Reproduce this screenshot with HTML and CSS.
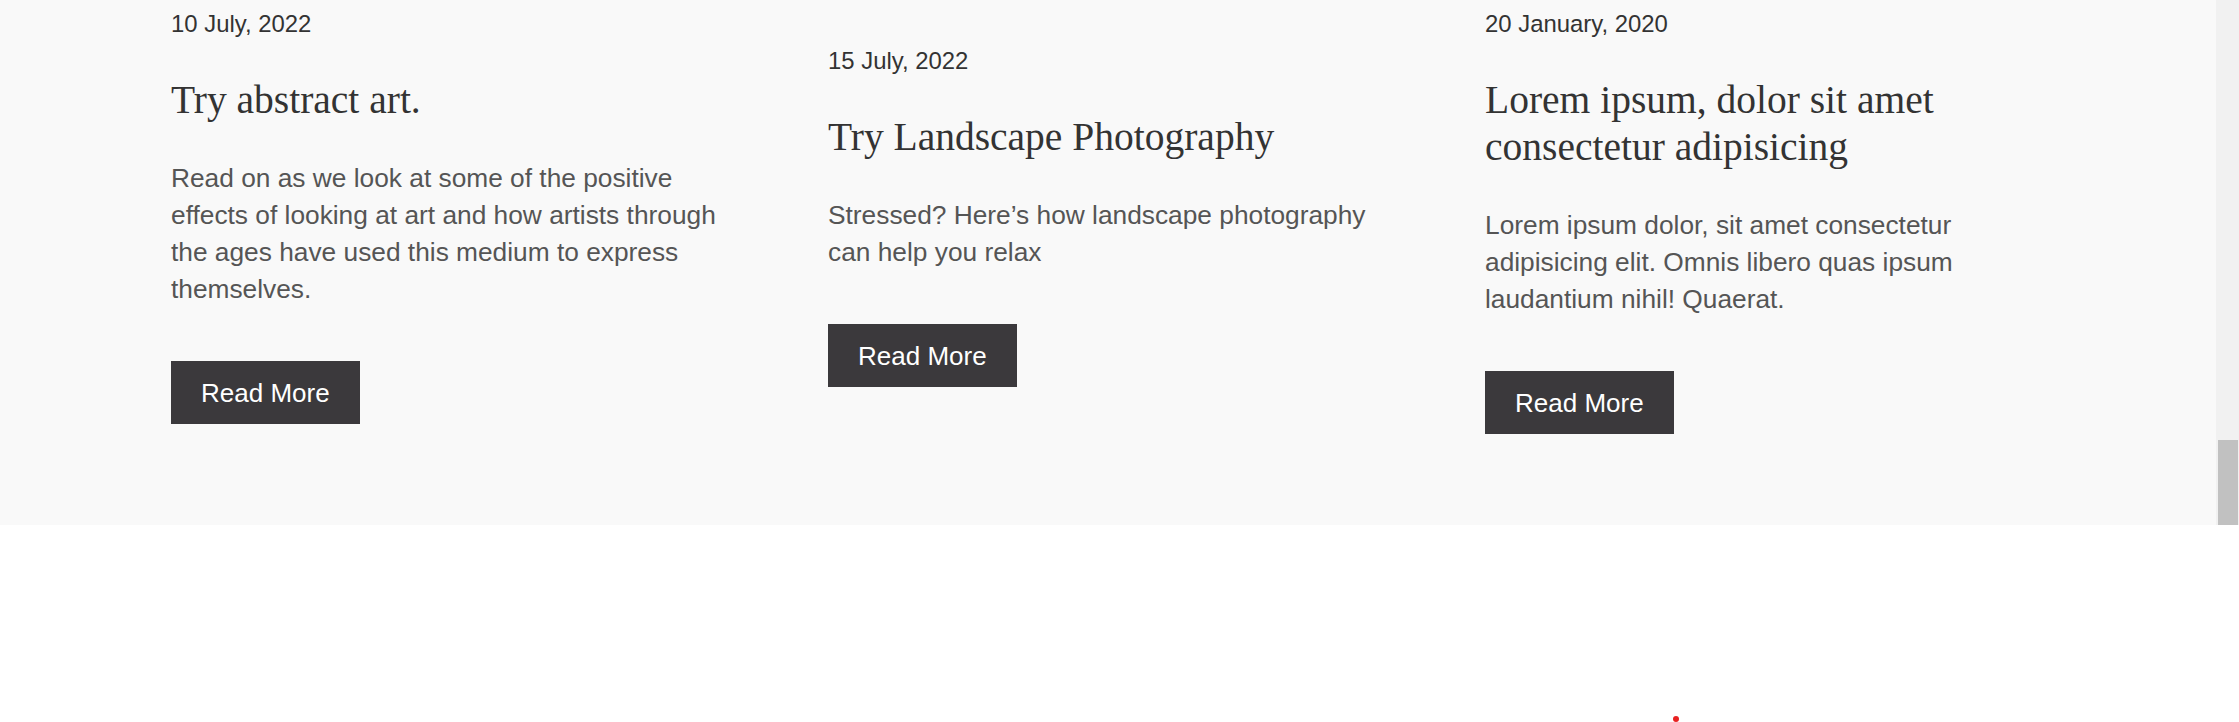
FILE: index.html
```html
<!DOCTYPE html>
<html lang="en">
<head>
<meta charset="utf-8">
<title>Blog posts</title>
<link rel="stylesheet" href="styles.css">
</head>
<body>
<div class="page">
  <div class="frame">
    <div class="viewport">
      <section class="posts">
        <div class="posts-grid">
          <article class="card">
            <p class="date">10 July, 2022</p>
            <h2 class="title">Try abstract art.</h2>
            <p class="excerpt">Read on as we look at some of the positive effects of looking at art and how artists through the ages have used this medium to express themselves.</p>
            <a class="btn" href="#">Read More</a>
          </article>
          <article class="card card-offset">
            <p class="date">15 July, 2022</p>
            <h2 class="title">Try Landscape Photography</h2>
            <p class="excerpt">Stressed? Here’s how landscape photography can help you relax</p>
            <a class="btn" href="#">Read More</a>
          </article>
          <article class="card">
            <p class="date">20 January, 2020</p>
            <h2 class="title">Lorem ipsum, dolor sit amet consectetur adipisicing</h2>
            <p class="excerpt">Lorem ipsum dolor, sit amet consectetur adipisicing elit. Omnis libero quas ipsum laudantium nihil! Quaerat.</p>
            <a class="btn" href="#">Read More</a>
          </article>
        </div>
      </section>
    </div>
    <div class="scrollbar" aria-hidden="true"><span class="thumb"></span></div>
  </div>
  <div class="below"><span class="dot"></span></div>
</div>
</body>
</html>
```

FILE: styles.css
```css
html, body {
  margin: 0;
  padding: 0;
  background: #ffffff;
  overflow: hidden;
}

.page {
  width: 2239px;
  height: 722px;
  font-family: "Liberation Sans", Arial, sans-serif;
}

.frame {
  height: 525px;
  display: flex;
  background: #f9f9f9;
}

.viewport {
  flex: 1;
  min-width: 0;
  overflow: hidden;
  display: flex;
  flex-direction: column;
  justify-content: flex-end;
}

.scrollbar {
  flex: none;
  width: 23px;
  background: #f1f1f1;
  display: flex;
  flex-direction: column;
  justify-content: flex-end;
}

.thumb {
  display: block;
  height: 85px;
  margin: 0 1px 0 2px;
  background: #c1c1c1;
}

.posts {
  flex: none;
  padding-bottom: 91px;
}

.posts-grid {
  width: 1874px;
  margin: 0 auto;
  display: grid;
  grid-template-columns: repeat(3, 560px);
  column-gap: 97px;
  align-items: start;
}

.card-offset {
  margin-top: 37px;
}

.date {
  margin: 0 0 40px;
  font-size: 23.9px;
  line-height: 26px;
  color: #333333;
}

.title {
  margin: 0 0 36px;
  font-family: "Liberation Serif", "Times New Roman", serif;
  font-weight: normal;
  font-size: 39.5px;
  line-height: 47px;
  color: #333333;
}

.excerpt {
  margin: 0 0 53px;
  font-size: 26.3px;
  line-height: 37px;
  color: #555555;
}

.btn {
  display: block;
  width: fit-content;
  padding: 16.5px 30px;
  background: #3b393c;
  color: #ffffff;
  font-size: 26px;
  line-height: 30px;
  text-decoration: none;
}

.below {
  height: 197px;
  box-sizing: border-box;
  padding: 191px 0 0 1673px;
}

.dot {
  display: block;
  width: 6px;
  height: 6px;
  border-radius: 50%;
  background: #e82121;
}
```
